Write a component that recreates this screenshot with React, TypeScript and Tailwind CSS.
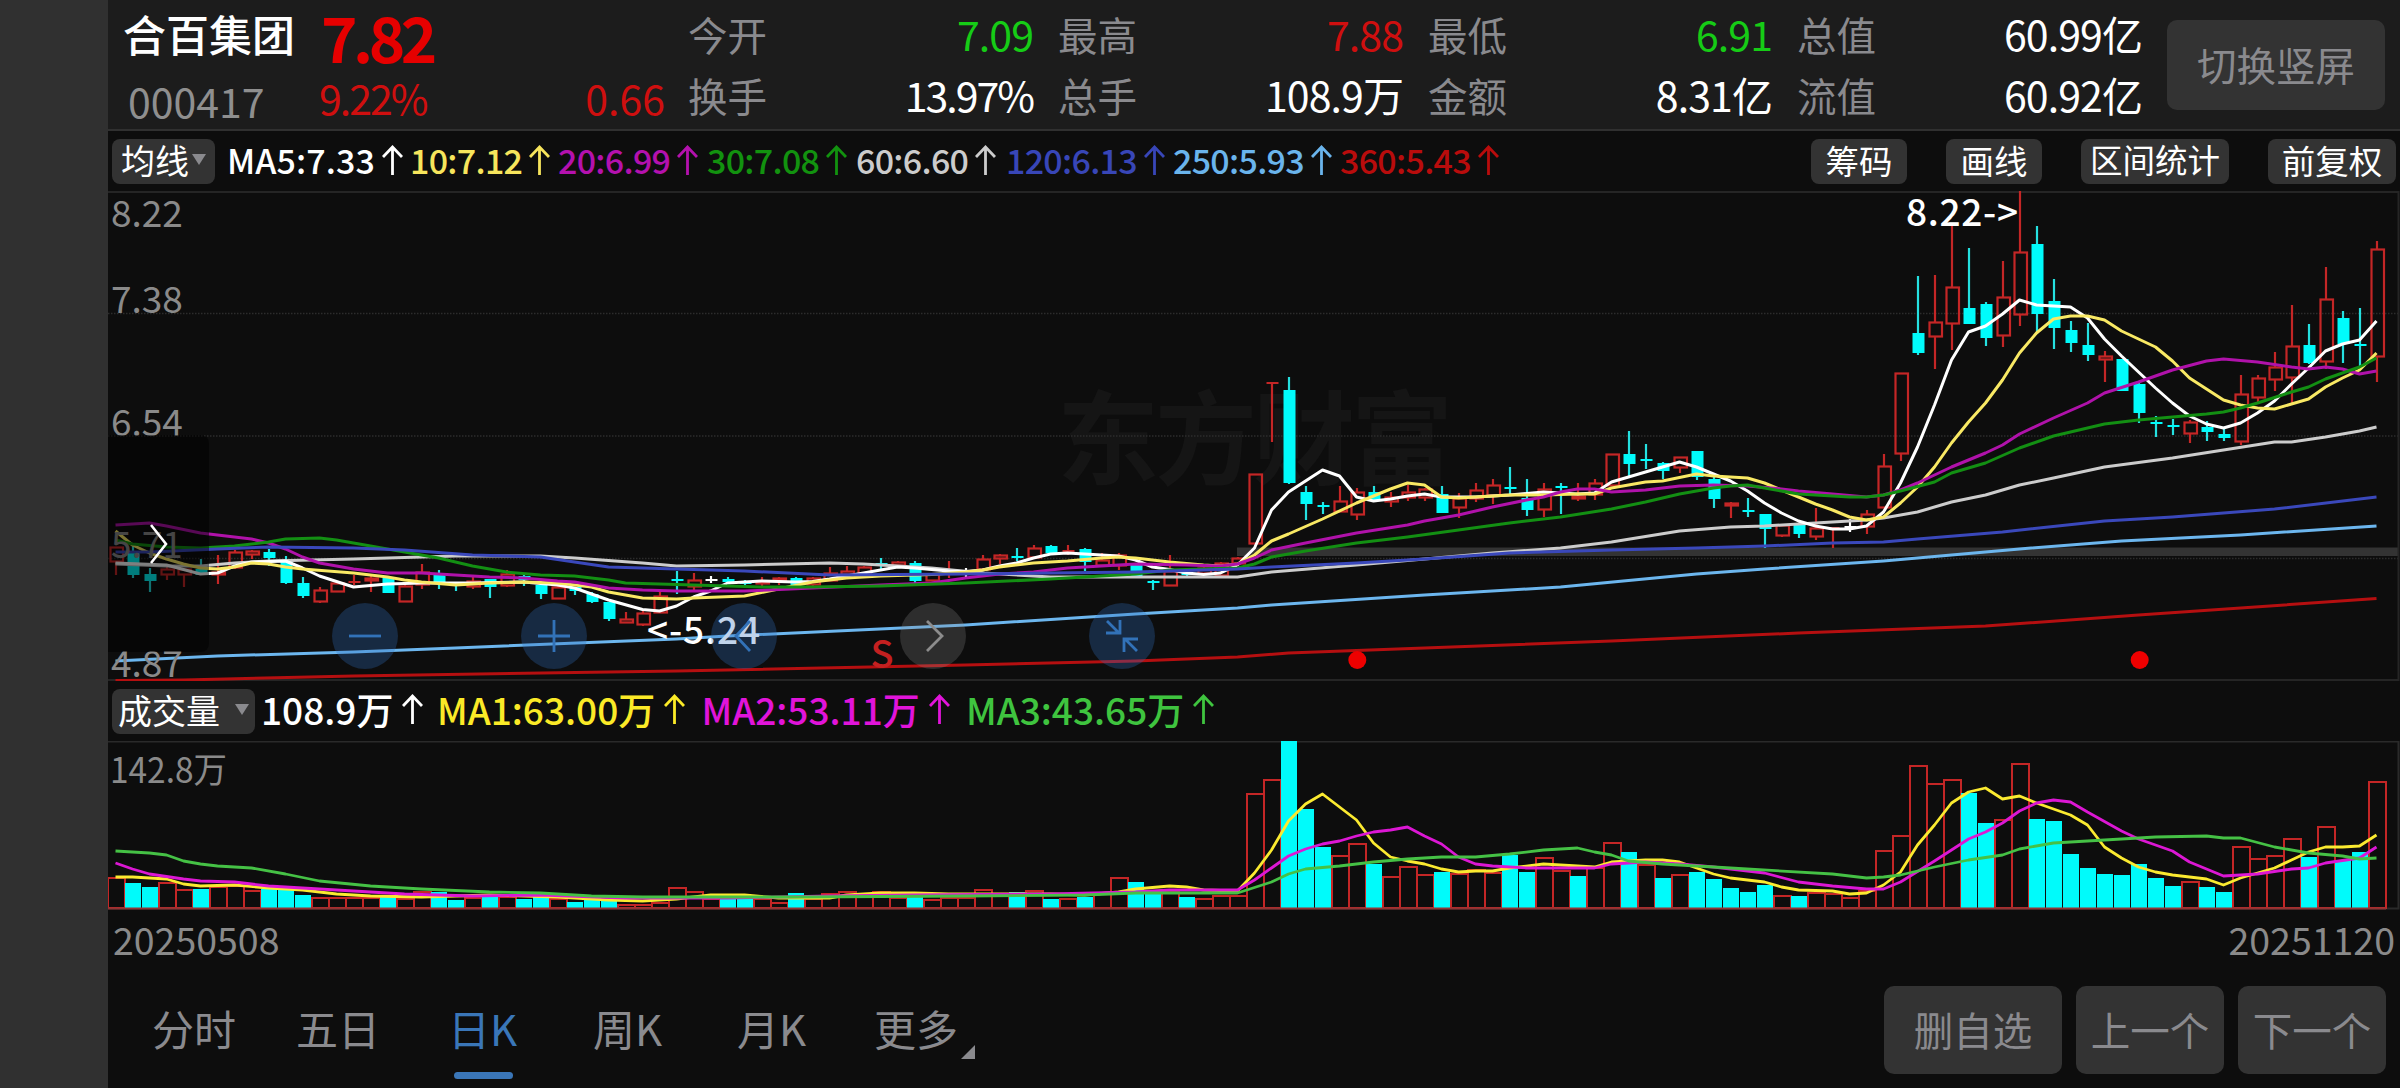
import type { ReactNode } from "react";

type Candle = [kind: "r" | "c" | "w", high: number, top: number, bottom: number, low: number];
type Point = [index: number, y: number];

const STEP = 17;
const cx = (i: number) => 115.5 + i * STEP;

const quotes = [
  { label: "今开", value: "7.09", color: "text-[#16cc16]", label2: "换手", value2: "13.97%", width: "w-[345px]", track2: "tracking-[-2px]" },
  { label: "最高", value: "7.88", color: "text-[#cf0f0f]", label2: "总手", value2: "108.9万", width: "w-[345px]", track2: "tracking-[-0.9px]" },
  { label: "最低", value: "6.91", color: "text-[#16cc16]", label2: "金额", value2: "8.31亿", width: "w-[344px]", track2: "tracking-[-0.9px]" },
  { label: "总值", value: "60.99亿", color: "text-white", label2: "流值", value2: "60.92亿", width: "w-[345px]", track2: "tracking-[-0.9px]" },
];

const averages = [
  { text: "MA5:7.33", box: "w-[183px] tracking-[0.1px] text-white" },
  { text: "10:7.12", box: "w-[148px] tracking-[-0.7px] text-[#f7e55c]" },
  { text: "20:6.99", box: "w-[149px] tracking-[-0.7px] text-[#b411ae]" },
  { text: "30:7.08", box: "w-[149px] tracking-[-0.7px] text-[#12920f]" },
  { text: "60:6.60", box: "w-[150px] tracking-[-0.7px] text-[#cccccc]" },
  { text: "120:6.13", box: "w-[167px] tracking-[-0.7px] text-[#3846b8]" },
  { text: "250:5.93", box: "w-[167px] tracking-[-0.7px] text-[#6ab4ec]" },
  { text: "360:5.43", box: "w-[167px] tracking-[-0.7px] text-[#b90c0c]" },
];

const volumeAverages = [
  { text: "108.9万", box: "w-[176px] text-white" },
  { text: "MA1:63.00万", box: "w-[264.5px] text-[#fbea27]" },
  { text: "MA2:53.11万", box: "w-[264.5px] text-[#e114da]" },
  { text: "MA3:43.65万", box: "w-[264.5px] text-[#3fc43f]" },
];

// kind, high, body top, body bottom, low
const candles: Candle[] = [
  ["r", 547, 547, 561, 575], ["c", 546, 553, 575, 578], ["c", 568, 574, 581, 592], ["r", 567, 569, 574, 580],
  ["r", 569, 569, 574, 587], ["c", 559, 569, 575, 575], ["r", 555, 572, 574, 584], ["r", 550, 552, 567, 569],
  ["r", 550, 551, 554, 559], ["c", 549, 552, 558, 566], ["c", 556, 560, 583, 584], ["c", 577, 583, 596, 598],
  ["r", 587, 590, 601, 603], ["r", 582, 583, 591, 592], ["r", 575, 581, 582, 585], ["r", 575, 578, 580, 592],
  ["c", 578, 578, 593, 593], ["r", 585, 586, 601, 601], ["r", 564, 572, 584, 589], ["c", 570, 575, 583, 589],
  ["c", 583, 583, 586, 591], ["r", 577, 581, 586, 589], ["c", 579, 579, 587, 598], ["r", 570, 574, 585, 587],
  ["c", 575, 576, 580, 586], ["c", 583, 585, 594, 599], ["r", 586, 587, 598, 599], ["c", 587, 587, 591, 595],
  ["c", 592, 594, 602, 603], ["c", 602, 602, 619, 621], ["r", 612, 619, 622, 623], ["r", 611, 613, 624, 626],
  ["r", 592, 596, 612, 613], ["c", 571, 579, 581, 594], ["r", 573, 580, 586, 592], ["w", 576, 579, 581, 583],
  ["c", 577, 579, 582, 584], ["c", 580, 581, 584, 588], ["r", 577, 581, 583, 586], ["r", 577, 578, 580, 585],
  ["c", 577, 578, 585, 585], ["r", 577, 578, 584, 586], ["r", 567, 573, 580, 581], ["r", 566, 571, 574, 576],
  ["r", 566, 567, 574, 575], ["c", 558, 563, 565, 569], ["r", 561, 562, 565, 566], ["c", 561, 563, 581, 583],
  ["r", 574, 574, 580, 581], ["r", 561, 570, 571, 578], ["w", 568, 571, 573, 577], ["r", 555, 559, 569, 570],
  ["r", 554, 555, 558, 564], ["c", 548, 556, 558, 561], ["r", 545, 548, 557, 558], ["c", 545, 546, 553, 554],
  ["r", 545, 550, 551, 555], ["c", 548, 549, 562, 571], ["r", 553, 560, 565, 565], ["r", 553, 555, 565, 570],
  ["c", 563, 563, 576, 576], ["c", 580, 581, 583, 590], ["r", 555, 571, 585, 585], ["c", 573, 573, 575, 576],
  ["r", 567, 568, 573, 573], ["r", 562, 563, 575, 576], ["r", 557, 558, 563, 563], ["r", 474, 474, 543, 544],
  ["r", 382, 382, 383, 442], ["c", 377, 390, 483, 484], ["c", 486, 492, 504, 520], ["c", 502, 505, 507, 514],
  ["r", 486, 501, 511, 512], ["r", 488, 492, 514, 520], ["c", 486, 492, 500, 501], ["r", 492, 497, 501, 507],
  ["r", 485, 492, 497, 501], ["r", 488, 489, 497, 501], ["c", 486, 494, 513, 513], ["r", 493, 498, 507, 518],
  ["r", 483, 490, 498, 502], ["r", 479, 485, 495, 504], ["c", 467, 487, 489, 495], ["c", 479, 498, 510, 516],
  ["r", 483, 489, 509, 517], ["c", 483, 486, 488, 514], ["r", 483, 496, 498, 501], ["r", 479, 483, 494, 500],
  ["r", 454, 454, 485, 486], ["c", 431, 454, 464, 477], ["c", 444, 459, 461, 469], ["c", 462, 463, 471, 479],
  ["r", 457, 457, 467, 473], ["c", 451, 451, 477, 480], ["c", 475, 479, 499, 508], ["r", 502, 503, 505, 518],
  ["c", 498, 510, 512, 517], ["c", 514, 514, 529, 548], ["r", 524, 525, 535, 537], ["c", 524, 524, 534, 538],
  ["r", 508, 528, 536, 540], ["r", 527, 527, 528, 548], ["w", 519, 526, 528, 532], ["r", 510, 514, 526, 534],
  ["r", 454, 466, 507, 508], ["r", 373, 373, 453, 461], ["c", 276, 333, 353, 355], ["r", 275, 322, 336, 369],
  ["r", 226, 287, 323, 350], ["c", 248, 308, 324, 324], ["c", 302, 304, 338, 346], ["r", 261, 297, 335, 347],
  ["r", 191, 252, 314, 326], ["c", 226, 244, 314, 332], ["c", 279, 301, 328, 349], ["c", 321, 330, 343, 352],
  ["c", 323, 345, 355, 361], ["r", 351, 356, 359, 382], ["c", 359, 359, 391, 391], ["c", 383, 384, 413, 423],
  ["c", 416, 422, 424, 437], ["c", 419, 425, 427, 435], ["r", 420, 422, 433, 443], ["c", 421, 427, 432, 441],
  ["c", 429, 434, 438, 441], ["r", 375, 394, 441, 445], ["r", 375, 378, 397, 404], ["r", 352, 367, 379, 391],
  ["r", 305, 346, 377, 403], ["c", 324, 345, 363, 364], ["r", 267, 299, 361, 369], ["c", 311, 318, 344, 363],
  ["c", 308, 344, 346, 366], ["r", 241, 249, 356, 382],
];

const priceLines: { color: string; points: Point[] }[] = [
  { color: "#cccccc", points: [[0, 564], [3, 566], [5, 566], [7, 563], [9, 561], [14, 559], [20, 556], [25, 556], [27, 558], [31, 563], [33, 566], [37, 565], [42, 563], [44, 564], [48, 568], [51, 573], [55, 577], [66, 577], [68, 572], [73, 565], [77, 559], [81, 553], [85, 548], [88, 542], [92, 531], [95, 527], [97, 526], [100, 523], [103, 520], [104, 518], [106, 512], [108, 502], [110, 495], [112, 485], [114, 478], [117, 467], [121, 458], [124, 450], [127, 442], [128, 442], [130, 437], [132, 431], [133, 427]] },
  { color: "#ffffff", points: [[0, 563], [3, 565], [5, 574], [6, 573], [7, 566], [8, 562], [10, 561], [11, 568], [12, 576], [14, 587], [16, 584], [18, 583], [21, 583], [24, 582], [26, 585], [27, 588], [29, 600], [31, 609.5], [32, 611], [33, 606], [34, 597], [35, 591], [36, 583], [38, 581], [40, 582], [41, 581.5], [42, 579], [44, 573], [46, 567], [47, 568], [49, 571], [50, 571.5], [51, 570], [52, 566], [53, 563], [54, 558], [55, 554], [56, 553], [57, 554], [58, 555], [59, 556], [60, 560], [61, 567], [62, 569.5], [63, 573], [64, 574.5], [65, 573], [66, 565], [67, 548], [68, 510], [69, 492], [70, 481], [71, 470], [72, 476], [73, 497], [74, 501], [75, 499], [76, 496], [77, 494], [78, 497], [80, 497], [82, 495], [84, 492], [86, 494], [87, 493], [88, 482], [89, 477], [90, 472], [91, 467], [92, 462], [93, 467], [94, 474], [95, 481], [96, 491], [97, 503], [98, 513], [99, 521], [100, 526], [101, 529], [102, 529], [103, 526], [104, 512], [105, 483], [106, 447], [107, 405], [108, 360], [109, 332], [110, 326], [111, 314], [112, 300], [113, 305], [114, 306], [115, 307], [116, 318], [117, 339], [118, 356], [119, 372], [120, 388], [121, 403], [122, 416], [123, 424], [124, 428], [125, 423], [126, 413], [127, 401], [128, 384], [129, 368], [130, 351], [131, 344], [132, 340], [133, 321]] },
  { color: "#f9e964", points: [[0, 531], [1, 545], [2, 553], [3, 559], [4, 564], [5, 568], [6, 569], [7, 567], [8, 563], [9, 564], [10, 567], [11, 569], [14, 573], [16, 577], [17, 580], [18, 582], [20, 585], [22, 583], [24, 582], [26, 583], [28, 587], [29, 592], [31, 598], [33, 599], [34, 598], [37, 596], [39, 589], [41, 582], [43, 578], [45, 576], [48, 574.5], [50, 572], [51, 570], [52, 567], [54, 563], [56, 561], [58, 558], [59, 557], [60, 558], [62, 562], [64, 565], [65, 566], [66, 564], [67, 555], [68, 541], [69, 534], [71, 519], [73, 503], [75, 489], [76, 483], [77, 485], [78, 497], [79, 498], [81, 496], [82, 495], [84, 495], [86, 494], [87, 494], [88, 488], [90, 482], [91, 481], [93, 474], [94, 476], [96, 478], [97, 483], [98, 490], [99, 497], [100, 504], [101, 510], [102, 517], [103, 520], [104, 517], [105, 503], [106, 487], [107, 467], [108, 443], [109, 422], [110, 403], [111, 380], [112, 353], [113, 333], [114, 319], [115, 316], [116, 316], [117, 320], [118, 331], [119, 339], [120, 347], [121, 361], [122, 378], [123, 389], [124, 400], [125, 405], [126, 408], [127, 409], [128, 404], [129, 399], [130, 387], [131, 378], [132, 370], [133, 353]] },
  { color: "#b012aa", points: [[0, 525], [2, 523], [3, 526], [5, 533], [7, 537], [8, 539], [9, 543], [10, 549], [11, 557], [12, 563], [14, 569], [16, 573], [18, 573], [20, 575], [22, 577], [24, 578], [26, 581], [27, 582], [29, 588], [31, 590], [33, 591], [37, 591], [41, 588], [45, 585], [48, 583], [50, 578], [52, 574], [54, 572], [56, 568], [58, 566], [60, 564], [63, 565], [65, 566], [66, 564], [67, 558], [68, 550], [70, 543], [73, 533], [76, 525], [77, 521], [79, 515], [81, 507], [83, 500], [84, 497], [85, 492], [86, 489], [87, 489], [88, 492], [90, 490], [92, 486], [94, 485], [96, 486], [98, 489], [99, 491], [101, 494], [103, 497], [104, 495], [105, 490], [106, 483], [107, 475], [108, 467], [110, 453], [111, 445], [112, 434], [114, 418], [116, 403], [117, 393], [119, 382], [121, 370], [123, 361], [124, 359], [126, 362], [128, 367], [129, 369], [130, 367], [131, 369], [132, 374], [133, 371]] },
  { color: "#138f13", points: [[0, 540], [1, 544], [3, 547], [5, 548], [7, 546], [9, 542], [10, 539], [12, 538], [13, 540], [15, 546], [17, 552], [19, 558], [20, 562], [21, 566], [23, 572], [25, 575], [27, 576], [29, 580], [30, 583], [32, 584], [34, 585], [38, 587], [41, 587], [45, 586], [50, 583], [55, 579], [58, 576], [60, 574], [62, 570], [66, 568], [67, 564], [68, 557], [70, 551], [73, 543], [76, 537], [79, 530], [82, 523], [85, 517], [88, 509], [90, 502], [92, 494], [94, 488], [95, 486], [96, 485], [97, 488], [99, 494], [101, 496], [102, 497], [103, 497], [104, 495], [105, 491], [107, 482], [108, 473], [110, 463], [112, 448], [114, 436], [117, 424], [119, 420], [121, 417], [123, 414], [124, 412], [125, 408], [126, 403], [128, 392], [129, 387], [130, 379], [132, 367], [133, 358]] },
  { color: "#3a48bb", points: [[0, 552], [2, 552], [6, 549], [9, 547], [14, 548], [17, 550], [21, 555], [25, 557], [29, 567], [33, 569], [37, 571], [42, 575], [50, 574], [55, 573], [60, 572], [64, 570], [66, 569], [68, 567], [73, 563], [77, 559], [82, 553], [88, 550], [93, 548], [97, 546], [101, 543], [104, 542], [106, 539], [111, 532], [117, 521], [121, 517], [127, 509], [133, 497]] },
  { color: "#6cb6ee", points: [[0, 661], [6, 656], [14, 652], [20, 648], [33, 639], [36, 636], [50, 625], [60, 614], [66, 608], [68, 605], [77, 595], [85, 587], [93, 574], [97, 569], [104, 561], [112, 549], [118, 541], [125, 535], [133, 526]] },
  { color: "#b50f10", points: [[0, 680.5], [4, 680], [14, 676], [33, 671], [50, 665], [60, 661], [66, 657], [69, 653], [77, 648], [88, 641], [99, 633], [110, 626], [119, 615], [133, 598.5]] },
];

const volumeTops = [
  877, 883, 887, 882, 889, 889, 886, 885, 890, 889, 890, 895, 897, 897, 897, 897, 897, 898, 891, 892, 900, 897, 897,
  896, 899, 897, 898, 902, 900, 900, 904, 904, 902, 887, 891, 898, 898, 898, 898, 902, 893, 898, 893, 891, 895, 891,
  897, 897, 899, 897, 897, 889, 895, 892, 890, 899, 898, 897, 892, 877, 882, 893, 890, 897, 898, 895, 895, 793, 779,
  741, 809, 847, 855, 843, 864, 876, 866, 874, 872, 873, 869, 872, 855, 872, 857, 870, 876, 867, 842, 852, 864, 878,
  874, 872, 879, 888, 892, 885, 895, 896, 892, 893, 897, 890, 850, 835, 765, 783, 779, 793, 823, 819, 763, 819, 821,
  854, 868, 874, 875, 864, 878, 886, 881, 887, 892, 846, 858, 855, 838, 857, 826, 860, 852, 781,
];

const fallingDays = new Set([
  1, 2, 5, 9, 10, 11, 16, 19, 20, 22, 24, 25, 27, 28, 29, 36, 37, 40, 47, 53, 55, 57, 60, 61, 63, 69, 70, 71, 74, 78,
  82, 83, 86, 89, 91, 93, 94, 95, 96, 97, 99, 109, 110, 113, 114, 115, 116, 117, 118, 119, 120, 121, 123, 124, 129,
  131, 132,
]);

const volumeLines: { color: string; points: Point[] }[] = [
  { color: "#fbea30", points: [[0, 877], [1, 877], [2, 878], [3, 879], [4, 884], [5, 886], [7, 885], [9, 888], [11, 890], [13, 894], [15, 896], [18, 897], [22, 895], [26, 897], [29, 900], [31, 901], [33, 899], [35, 895], [37, 895], [39, 898], [42, 898], [43, 895], [45, 893], [47, 893], [49, 894], [53, 894], [55, 894], [57, 895], [59, 892], [60, 889], [62, 886], [63, 887], [64, 890], [66, 891], [67, 873], [68, 850], [69, 821], [70, 804], [71, 794], [72, 807], [73, 820], [74, 843], [75, 857], [76, 861], [77, 864], [78, 869], [79, 872], [80, 871], [81, 871], [82, 868], [84, 864], [86, 866], [87, 867], [88, 862], [90, 860], [91, 860], [92, 862], [93, 868], [94, 874], [95, 878], [97, 882], [98, 887], [99, 890], [101, 891], [102, 894], [103, 893], [104, 885], [105, 872], [106, 845], [107, 825], [108, 803], [109, 792], [110, 788], [111, 799], [112, 796], [113, 803], [115, 815], [116, 825], [117, 847], [118, 858], [119, 867], [120, 872], [121, 875], [122, 877], [123, 879], [124, 885], [125, 878], [126, 873], [127, 868], [128, 860], [129, 852], [130, 847], [131, 847], [132, 846], [133, 835]] },
  { color: "#dc17d4", points: [[0, 863], [1, 869], [2, 874], [4, 879], [5, 881], [7, 882], [9, 886], [11, 888], [14, 891], [17, 894], [21, 896], [25, 895], [30, 898], [36, 898], [42, 896], [47, 895], [55, 894], [60, 892], [62, 890], [66, 890], [67, 880], [68, 868], [69, 856], [70, 849], [71, 844], [72, 841], [73, 836], [74, 832], [75, 830], [76, 827], [77, 836], [78, 844], [79, 857], [80, 864], [81, 866], [83, 868], [85, 868], [87, 868], [88, 864], [90, 862], [92, 864], [94, 867], [97, 873], [99, 882], [101, 886], [103, 889], [104, 889], [105, 882], [107, 861], [109, 839], [110, 832], [111, 823], [112, 811], [113, 803], [114, 800], [115, 802], [116, 812], [118, 831], [119, 839], [121, 851], [122, 862], [124, 876], [126, 874], [128, 869], [129, 868], [130, 863], [132, 858], [133, 847]] },
  { color: "#45c145", points: [[0, 851], [2, 853], [3, 855], [4, 861], [5, 864], [6, 866], [8, 868], [10, 874], [12, 881], [15, 886], [18, 889], [22, 892], [25, 893], [28, 896], [31, 897], [40, 897], [50, 896], [57, 895], [60, 893], [66, 893], [68, 882], [69, 874], [70, 869], [72, 866], [74, 862], [76, 859], [78, 857], [80, 857], [82, 854], [84, 850], [86, 848], [87, 852], [88, 855], [89, 861], [91, 864], [95, 868], [101, 874], [103, 878], [104, 877], [105, 875], [107, 867], [109, 860], [111, 855], [112, 849], [114, 843], [117, 840], [120, 837], [123, 836], [124, 838], [125, 838], [127, 847], [129, 853], [131, 856], [132, 859], [133, 858]] },
];

const toPoints = (points: Point[]) => points.map(([i, y]) => `${cx(i)},${y}`).join(" ");

function UpArrow() {
  return (
    <svg width="21" height="30" viewBox="0 0 21 30" fill="none" stroke="currentColor" strokeWidth="2.8" className="shrink-0">
      <path d="M10.5 30V2M1 12l9.5-10L20 12" />
    </svg>
  );
}

function Pill({ children, className }: { children: ReactNode; className: string }) {
  return (
    <button className={`flex h-[45px] shrink-0 items-center justify-center rounded-lg bg-[#333333] pb-[3px] leading-none text-white ${className}`}>
      {children}
    </button>
  );
}

function Header() {
  return (
    <header className="flex h-[131px] border-b-2 border-[#303030] bg-[#1c1c1c] text-[41px] leading-none">
      <div className="flex w-[213px] flex-col pt-[12px] pl-[15px]">
        <div className="h-[68px] text-[43px] font-medium whitespace-nowrap text-white">合百集团</div>
        <div className="pl-[5px] text-[#8f8f8f]">000417</div>
      </div>
      <div className="flex w-[344px] flex-col text-[#cf0f0f]">
        <div className="h-[77px] pt-[5px] text-[62px] font-bold tracking-[-4.5px] text-[#e60000]">7.82</div>
        <div className="flex justify-between">
          <span className="-ml-[2px] tracking-[-2px]">9.22%</span>
          <span>0.66</span>
        </div>
      </div>
      <div className="flex pl-[23px]">
        {quotes.map((q) => (
          <div key={q.label} className={`mr-[25px] flex flex-col gap-[20px] pt-[13px] whitespace-nowrap ${q.width}`}>
            <div className="flex justify-between">
              <span className="text-[39.5px] leading-[41px] text-[#8a8a8e]">{q.label}</span>
              <span className={`tracking-[-0.9px] ${q.color}`}>{q.value}</span>
            </div>
            <div className="flex justify-between">
              <span className="text-[39.5px] leading-[41px] text-[#8a8a8e]">{q.label2}</span>
              <span className={`text-white ${q.track2}`}>{q.value2}</span>
            </div>
          </div>
        ))}
      </div>
      <button className="mt-[20px] h-[90px] w-[218px] rounded-[10px] bg-[#333333] pb-[3px] text-[39.5px] text-[#8a8a8e]">切换竖屏</button>
    </header>
  );
}

function AverageBar() {
  return (
    <div className="flex h-[60px] items-center pl-[4px] text-[34px]">
      <Pill className="w-[103px] gap-[3px] text-[34px]">
        均线
        <svg width="14" height="11" viewBox="0 0 14 11"><path d="M0 0h14L7 11z" fill="#8a8a8e" /></svg>
      </Pill>
      <div className="flex grow pb-[3px] pl-[12px] leading-none font-medium">
        {averages.map((a) => (
          <div key={a.text} className={`flex shrink-0 items-center gap-[7px] ${a.box}`}>
            <span>{a.text}</span>
            <UpArrow />
          </div>
        ))}
      </div>
      <div className="flex gap-[39px] pr-[4px] text-[33.5px]">
        <Pill className="w-[96px]">筹码</Pill>
        <Pill className="w-[96px]">画线</Pill>
        <Pill className="w-[148px] text-[32.5px]">区间统计</Pill>
        <Pill className="w-[128px]">前复权</Pill>
      </div>
    </div>
  );
}

function CandleShape({ candle, index }: { candle: Candle; index: number }) {
  const [kind, high, top, bottom, low] = candle;
  const x = cx(index) + 0.5;
  const color = kind === "r" ? "#c42626" : kind === "c" ? "#00fbfb" : "#ffffff";
  const wick = kind === "c" ? "#25e0e0" : color;
  const hollow = kind === "r" && bottom - top > 1;
  return (
    <g stroke={wick} strokeWidth="2.2">
      <path d={hollow ? `M${x} ${high}V${top}M${x} ${bottom}V${low}` : `M${x} ${high}V${low}`} />
      {hollow ? (
        <rect x={x - 5.5} y={top + 0.5} width="12.5" height={bottom - top} fill="none" />
      ) : (
        <rect x={x - 5.5} y={top} width="12" height={Math.max(bottom - top, 2)} fill={color} stroke="none" />
      )}
    </g>
  );
}

function PriceChart() {
  return (
    <svg width="2292" height="490" viewBox="108 191 2292 490" fill="none" className="block">
      <text x="1057" y="477" fontSize="102" fontWeight="700" fill="#151515" textLength="396">东方财富</text>
      <rect x="1237" y="547.5" width="1162" height="8.5" fill="#333333" />
      {[313.5, 436, 558.5].map((y) => (
        <path key={y} d={`M108 ${y}H2399`} stroke="#2c2c2c" strokeWidth="1.5" strokeDasharray="1.5 1.5" />
      ))}
      <path d="M108 192H2398.5V680H108" stroke="#252525" strokeWidth="2" />
      {candles.map((candle, i) => (
        <CandleShape key={i} candle={candle} index={i} />
      ))}
      {priceLines.map((line) => (
        <polyline key={line.color} points={toPoints(line.points)} stroke={line.color} strokeWidth="3" strokeLinejoin="round" />
      ))}
      <g fontSize="37" fill="#8a8a8a">
        <text x="111" y="227">8.22</text>
        <text x="111" y="312.5">7.38</text>
        <text x="111" y="436">6.54</text>
        <text x="111" y="557.5">5.71</text>
        <text x="111" y="677">4.87</text>
      </g>
      <g fontSize="37" fill="#ffffff" fontWeight="500">
        <text x="1906" y="226" textLength="112">8.22-&gt;</text>
        <text x="647" y="644" textLength="113">&lt;-5.24</text>
      </g>
      <text x="870.5" y="668" fontSize="38" fontWeight="500" fill="#c42020">S</text>
      <circle cx="1357.3" cy="660" r="9" fill="#ee0000" />
      <circle cx="2139.7" cy="660" r="9" fill="#ee0000" />
    </svg>
  );
}

const controls = [
  { path: "M17 33h32", muted: false },
  { path: "M17 33h32M33 17v32", muted: false },
  { path: "M39 18 25 33l14 15", muted: false },
  { path: "M27 18 42 33 27 48", muted: true },
  { path: "M18 18 30 30M31 17v13H17M48 48 37 37M35 49V36h14", muted: false },
];

function ChartOverlay() {
  return (
    <>
      <button className="absolute top-[244px] left-0 flex h-[217px] w-[101px] items-center rounded-r-lg bg-black/50 pl-[42px]">
        <svg width="18" height="40" viewBox="0 0 18 40" fill="none" stroke="#ffffff" strokeWidth="2.6">
          <path d="M1 1 16 20 1 39" />
        </svg>
      </button>
      <div className="absolute top-[412px] left-[224px] flex gap-[123.3px]">
        {controls.map((c) => (
          <button key={c.path} className={`size-[66px] rounded-full ${c.muted ? "bg-[#909090]/25" : "bg-[#2e6ebe]/30"}`}>
            <svg width="66" height="66" viewBox="0 0 66 66" fill="none" stroke={c.muted ? "#8c8c8c" : "#3272b8"} strokeWidth="2.8">
              <path d={c.path} />
            </svg>
          </button>
        ))}
      </div>
    </>
  );
}

function VolumeBar() {
  return (
    <div className="flex h-[60px] items-center pl-[4px] text-[37px] leading-none">
      <Pill className="w-[143px] gap-[15px] text-[34px]">
        成交量
        <svg width="14" height="11" viewBox="0 0 14 11"><path d="M0 0h14L7 11z" fill="#8a8a8e" /></svg>
      </Pill>
      <div className="flex pb-[4px] pl-[6px] font-medium">
        {volumeAverages.map((a) => (
          <div key={a.text} className={`flex shrink-0 items-center gap-[9px] whitespace-nowrap ${a.box}`}>
            <span>{a.text}</span>
            <UpArrow />
          </div>
        ))}
      </div>
    </div>
  );
}

function VolumeChart() {
  return (
    <svg width="2292" height="169" viewBox="108 741 2292 169" fill="none" className="block">
      <path d="M108 741.5H2398.5V908.5H108" stroke="#2a2a2a" strokeWidth="2" />
      {volumeTops.map((top, i) =>
        fallingDays.has(i) ? (
          <rect key={i} x={108 + i * STEP} y={top} width="16" height={908 - top} fill="#00fbfb" />
        ) : (
          <rect key={i} x={108 + i * STEP} y={top + 1} width="17" height={907 - top} stroke="#c42626" strokeWidth="2" />
        ),
      )}
      <path d="M108 908.5H2386" stroke="#8f3535" strokeWidth="2" />
      {volumeLines.map((line) => (
        <polyline key={line.color} points={toPoints(line.points)} stroke={line.color} strokeWidth="2.8" strokeLinejoin="round" />
      ))}
      <text x="110" y="783" fontSize="35.5" textLength="117" lengthAdjust="spacingAndGlyphs" fill="#8a8a8a">142.8万</text>
    </svg>
  );
}

function Footer() {
  return (
    <footer className="flex h-[124px] items-start pt-[22px] pl-[44px] text-[42px] leading-none text-[#8a8a8e]">
      <div className="w-[144px] pt-[21px]">分时</div>
      <div className="w-[152px] pt-[21px]">五日</div>
      <div className="flex w-[145px] flex-col pt-[21px] text-[#3a76b8]">
        日K
        <div className="mt-[23px] ml-[6px] h-[7px] w-[59px] rounded-full bg-[#3a76b8]" />
      </div>
      <div className="w-[144px] pt-[21px]">周K</div>
      <div className="w-[137px] pt-[21px]">月K</div>
      <div className="flex items-end pt-[21px]">
        更多
        <svg width="14" height="14" viewBox="0 0 14 14" className="-mb-[10px] ml-[3px]"><path d="M14 0v14H0z" fill="#8a8a8e" /></svg>
      </div>
      <div className="ml-auto flex gap-[14px] pr-[14px] text-[39.5px]">
        <button className="h-[88px] w-[178px] rounded-[10px] bg-[#333333] pb-[3px]">删自选</button>
        <button className="h-[88px] w-[148px] rounded-[10px] bg-[#333333] pb-[3px]">上一个</button>
        <button className="h-[88px] w-[148px] rounded-[10px] bg-[#333333] pb-[3px]">下一个</button>
      </div>
    </footer>
  );
}

export default function App() {
  return (
    <div className="flex h-[1088px] w-[2400px] overflow-hidden bg-[#0d0d0d] font-['Noto_Sans_CJK_SC',sans-serif]">
      <aside className="w-[108px] shrink-0 bg-[#303030]" />
      <main className="flex w-[2292px] flex-col">
        <Header />
        <AverageBar />
        <div className="relative h-[490px]">
          <PriceChart />
          <ChartOverlay />
        </div>
        <VolumeBar />
        <VolumeChart />
        <div className="flex h-[54px] justify-between pt-[10px] pr-[5px] pl-[5px] text-[37.5px] leading-none text-[#8a8a8a]">
          <span>20250508</span>
          <span>20251120</span>
        </div>
        <Footer />
      </main>
    </div>
  );
}
